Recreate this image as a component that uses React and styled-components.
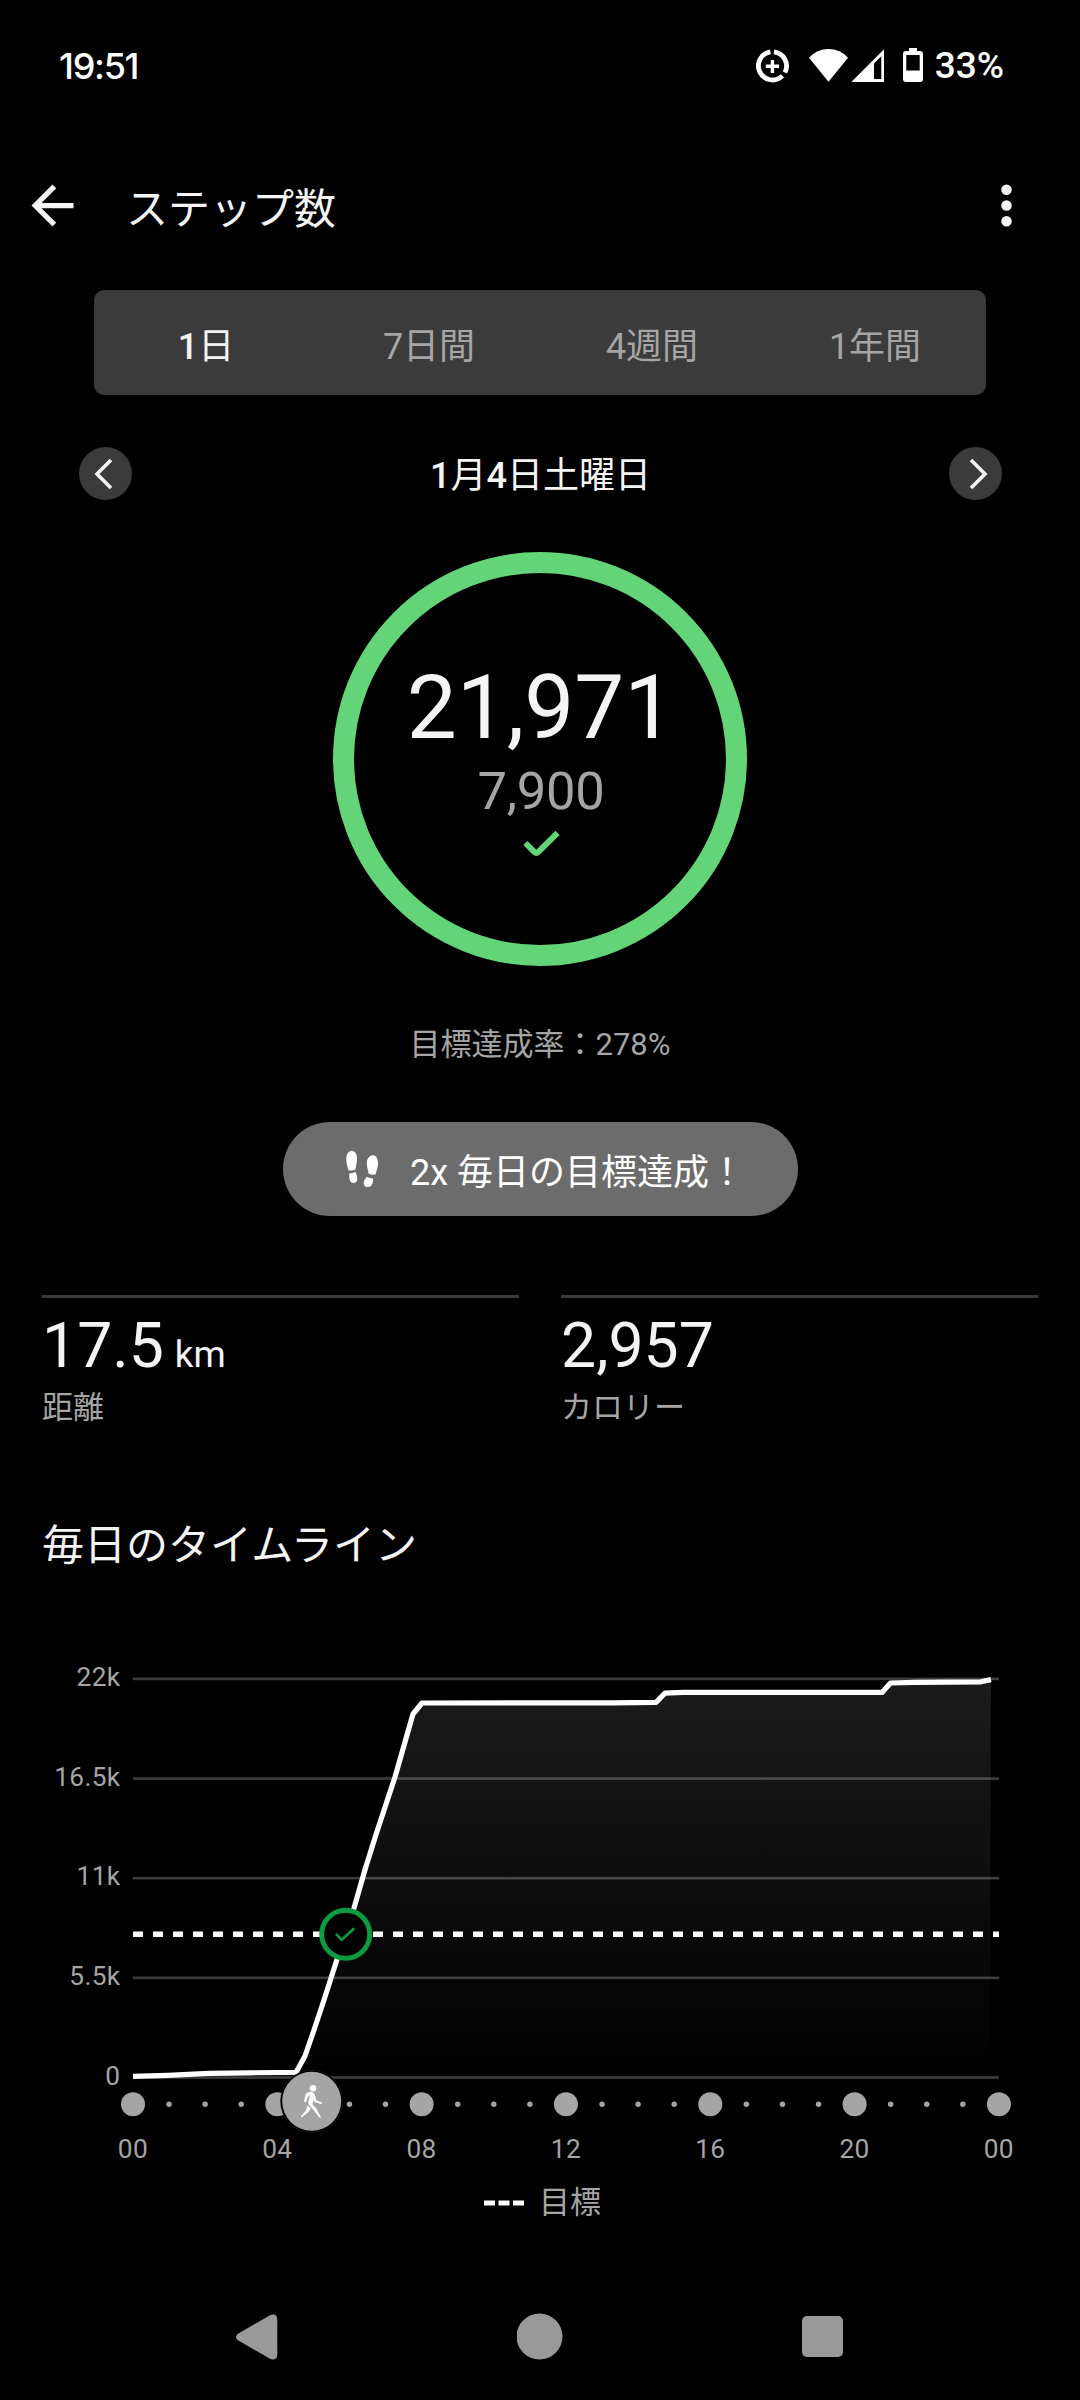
import styled, { createGlobalStyle } from "styled-components";

const GlobalStyle = createGlobalStyle`
  body {
    margin: 0;
    background: #000;
  }
  * {
    box-sizing: border-box;
  }
`;

const Screen = styled.div`
  width: 1080px;
  height: 2400px;
  overflow: hidden;
  display: flex;
  flex-direction: column;
  background: #000;
  color: #f4f4f4;
  font-family: Roboto, "Noto Sans CJK JP", sans-serif;
  font-weight: 400;
`;

const StatusBar = styled.header`
  height: 132px;
  padding: 0 76px 0 59px;
  display: flex;
  align-items: center;
  justify-content: space-between;
  color: #fff;
`;

const Clock = styled.span`
  font-family: Inter, sans-serif;
  font-weight: 500;
  font-size: 36px;
  line-height: 40px;
  letter-spacing: -1.3px;
`;

const StatusIcons = styled.div`
  display: flex;
  align-items: center;
  gap: 11px;
`;

const BatteryLevel = styled.span`
  font-weight: 500;
  font-size: 37px;
  line-height: 40px;
`;

const AppBar = styled.div`
  height: 147px;
  padding: 0 42px 0 21px;
  display: flex;
  align-items: center;
`;

const Title = styled.h1`
  margin: 9px 0 0 42px;
  flex: 1;
  font-size: 42px;
  font-weight: 400;
  line-height: 60px;
`;

const Tabs = styled.nav`
  height: 105px;
  margin: 11px 94px 0;
  display: flex;
  border-radius: 10px;
  background: #3b3b3b;
`;

const Tab = styled.button`
  flex: 1;
  padding: 1px 0 0 1px;
  border: 0;
  background: none;
  font-family: inherit;
  font-size: 36px;
  color: ${(props) => (props.$active ? "#f4f4f4" : "#a5a5a5")};
`;

const Digit = styled.span`
  font-weight: ${(props) => (props.$bold ? 500 : 400)};
`;

const DateRow = styled.div`
  height: 53px;
  margin: 52px 78px 0 79px;
  display: flex;
  align-items: center;
  justify-content: space-between;
`;

const RoundButton = styled.button`
  width: 53px;
  height: 53px;
  padding: 0;
  border: 0;
  border-radius: 50%;
  background: #3b3b3b;
  svg {
    display: block;
  }
`;

const DateText = styled.span`
  padding-top: 6px;
  font-size: 36px;
  line-height: 49px;
`;

const Ring = styled.section`
  width: 414px;
  height: 414px;
  margin: 52px auto 0;
  padding-top: 87px;
  display: flex;
  flex-direction: column;
  align-items: center;
  border: 21px solid #63d478;
  border-radius: 50%;
`;

const Steps = styled.div`
  padding-left: 1px;
  font-size: 89px;
  line-height: 96px;
`;

const Goal = styled.div`
  margin-top: 4px;
  padding-left: 2px;
  font-size: 52.5px;
  line-height: 62px;
  letter-spacing: -0.3px;
  color: #a5a5a5;
`;

const RingCheck = styled.svg`
  margin: 5px 0 0 3px;
`;

const GoalRate = styled.p`
  margin: 58px 0 0;
  text-align: center;
  font-size: 31px;
  line-height: 42px;
  color: #a5a5a5;
`;

const Badge = styled.div`
  width: 515px;
  height: 94px;
  margin: 56px 0 0 283px;
  padding-left: 62px;
  display: flex;
  align-items: center;
  border-radius: 47px;
  background: #6c6c6c;
  color: #fff;
`;

const BadgeText = styled.span`
  margin-left: 31px;
  padding-top: 8px;
  font-size: 36px;
  line-height: 49px;
`;

const Stats = styled.section`
  margin: 79px 42px 0;
  display: flex;
  gap: 42px;
`;

const Stat = styled.div`
  flex: 1;
  height: 142px;
  padding-top: 11px;
  border-top: 3px solid #3b3b3b;
`;

const StatValue = styled.div`
  height: 74px;
  font-size: 62.5px;
  line-height: 74px;
`;

const StatUnit = styled.span`
  margin-left: 11px;
  font-size: 36.75px;
`;

const StatLabel = styled.div`
  margin-top: 3px;
  font-size: 31px;
  line-height: 44px;
  color: #a5a5a5;
`;

const SectionTitle = styled.h2`
  margin: 79px 42px 0;
  font-size: 42px;
  font-weight: 400;
  line-height: 60px;
`;

const Chart = styled.svg`
  display: block;
  flex: none;
  margin-top: 64px;
  text {
    font-size: 26.25px;
    letter-spacing: 0.3px;
    fill: #a5a5a5;
  }
`;

const Legend = styled.div`
  height: 50px;
  margin-top: 2px;
  padding-left: 5px;
  display: flex;
  align-items: center;
  justify-content: center;
  gap: 15px;
  font-size: 31px;
  line-height: 44px;
  color: #a5a5a5;
`;

const NavBar = styled.footer`
  height: 47px;
  margin-top: 85px;
  padding: 0 237px 0 236px;
  display: flex;
  align-items: center;
  justify-content: space-between;
`;

const TABS = [
  ["1", "日"],
  ["7", "日間"],
  ["4", "週間"],
  ["1", "年間"],
];

const Y_LABELS = ["22k", "16.5k", "11k", "5.5k", "0"];
const X_LABELS = ["00", "04", "08", "12", "16", "20", "00"];

// the chart svg starts at this page height, points below are in page pixels
const CHART_TOP = 1640;

const POINTS = [
  [133, 2076.3],
  [168, 2075.3],
  [209, 2073.3],
  [250, 2072.8],
  [296, 2072.4],
  [305, 2056],
  [313, 2033],
  [324, 2000],
  [336.5, 1961],
  [354, 1908],
  [365.5, 1868],
  [376.5, 1833],
  [395, 1777],
  [413, 1714],
  [422, 1703],
  [612, 1702.8],
  [656, 1702.3],
  [665, 1693.2],
  [683, 1692.4],
  [882, 1692.4],
  [890.5, 1683],
  [915, 1682.3],
  [981, 1681.8],
  [991, 1679.6],
];

const line = POINTS.map(([x, y]) => `${x},${y}`).join(" ");

function StepChart() {
  return (
    <Chart width="1080" height="536" viewBox={`0 ${CHART_TOP} 1080 536`}>
      <defs>
        <linearGradient id="area" gradientUnits="userSpaceOnUse" x1="0" y1="1679" x2="0" y2="2077">
          <stop offset="0" stopColor="#1b1b1b" />
          <stop offset="1" stopColor="#000" />
        </linearGradient>
      </defs>
      <polygon points={`${line} 990,2077 133,2077`} fill="url(#area)" />
      {Y_LABELS.map((label, i) => (
        <g key={label}>
          <rect x="133" y={1677.6 + i * 99.65} width="866" height="2.6" fill="#fff" fillOpacity="0.24" />
          <text x="120.3" y={1686 + i * 99.65} textAnchor="end">
            {label}
          </text>
        </g>
      ))}
      <polyline points={line} fill="none" stroke="#fff" strokeWidth="5.2" strokeLinejoin="round" />
      <path d="M133 1934.3H999" stroke="#fff" strokeWidth="5.6" strokeDasharray="10 10" />

      {/* hour dots, a large one every four hours */}
      {Array.from({ length: 25 }, (_, i) => (
        <circle key={i} cx={133 + i * 36.08} cy="2104.3" r={i % 4 === 0 ? 12 : 2.7} fill="#a5a5a5" />
      ))}
      {X_LABELS.map((label, i) => (
        <text key={i} x={132.9 + i * 144.33} y="2158" textAnchor="middle">
          {label}
        </text>
      ))}

      {/* goal reached */}
      <circle cx="345.7" cy="1934.3" r="24" fill="#000" stroke="#0d9b41" strokeWidth="5" />
      <path d="M336 1934l5.8 5.8 12.4-11.6" fill="none" stroke="#0d9b41" strokeWidth="2.6" />

      {/* walking activity */}
      <circle cx="311.7" cy="2101.3" r="31.2" fill="#000" stroke="#222" strokeWidth="0.6" />
      <circle cx="311.7" cy="2101.3" r="29.5" fill="#a5a5a5" />
      <g fill="#fff">
        <circle cx="313" cy="2088.3" r="3.2" />
        <path d="M306 2093.6q3.500-2.600 6.500-1.400q2.300 1 3 5l1 3.300l5.600 2.100l-.4 1.600l-7-2.200l-1.400-2l-.8 4.400l3.800 4.200l4.700 8.800l-1.400.3l-7.600-9.800l-3.200-3.400q-1-1.400-.4-3.200l1.700-6.200l-2.300 1.800l-1.800 5.400l-2-.7l1.200-5.500z" />
        <path d="M307.600 2105.200l3.100 3.200l-1.700 3.100l-7.400 6l-.6-1.200l5-5.900z" />
      </g>
    </Chart>
  );
}

function App() {
  return (
    <>
      <GlobalStyle />
      <Screen>
        <StatusBar>
          <Clock>19:51</Clock>
          <StatusIcons>
            <svg width="168" height="36" viewBox="756 48 168 36" fill="#fff">
              <path d="M774 51.900A14.100 14.100 0 0 1 784.900 72.500M782.400 75.900A14.100 14.100 0 1 1 770.400 51.900" fill="none" stroke="#fff" strokeWidth="4.800" />
              <path d="M765.800 66.300H779M772.400 60V73" stroke="#fff" strokeWidth="3.400" />
              <path d="M828.500 81.700L809 57.700Q817 49 828.500 49T848 57.700Z" />
              <path fillRule="evenodd" d="M851.300 82L884 49.300V82ZM874 63.500V79H881.300V56.300Z" />
              <path fillRule="evenodd" d="M909 48h8v3h3q3 0 3 3v25q0 3-3 3h-14q-3 0-3-3v-25q0-3 3-3h3zM906.300 55v15.500h13.400v-15.500z" />
            </svg>
            <BatteryLevel>33%</BatteryLevel>
          </StatusIcons>
        </StatusBar>

        <AppBar>
          <svg width="63" height="63" viewBox="0 0 24 24" fill="#f4f4f4">
            <path d="M20 11H7.830l5.590-5.590L12 4l-8 8 8 8 1.410-1.410L7.830 13H20z" />
          </svg>
          <Title>ステップ数</Title>
          <svg width="63" height="63" viewBox="0 0 24 24" fill="#f4f4f4">
            <circle cx="12" cy="6" r="2" />
            <circle cx="12" cy="12" r="2" />
            <circle cx="12" cy="18" r="2" />
          </svg>
        </AppBar>

        <Tabs>
          {TABS.map(([count, unit], i) => (
            <Tab key={count + unit} $active={i === 0}>
              <Digit $bold={i === 0}>{count}</Digit>
              {unit}
            </Tab>
          ))}
        </Tabs>

        <DateRow>
          <RoundButton>
            <svg width="53" height="53" fill="none" stroke="#f4f4f4" strokeWidth="3.600">
              <path d="M32 13L18 27l14 14" />
            </svg>
          </RoundButton>
          <DateText>
            <Digit $bold>1</Digit>月<Digit $bold>4</Digit>日土曜日
          </DateText>
          <RoundButton>
            <svg width="53" height="53" fill="none" stroke="#f4f4f4" strokeWidth="3.600">
              <path d="M22 13l14 14-14 14" />
            </svg>
          </RoundButton>
        </DateRow>

        <Ring>
          <Steps>21,971</Steps>
          <Goal>7,900</Goal>
          <RingCheck width="44" height="34" viewBox="520 827 44 34" fill="none" stroke="#63d478" strokeWidth="6">
            <path d="M525.400 843l9.100 9.100q1.800 1.700 3.600 0l19.500-19.300" />
          </RingCheck>
        </Ring>

        <GoalRate>目標達成率：278%</GoalRate>

        <Badge>
          <svg width="34" height="38" viewBox="346 1151 34 38" fill="#fff">
            <path d="M352.500 1152c4 0 5.500 3.500 5.500 8c0 4-1.200 7-1.500 10.500q-3.500 1.300-7 .7c-1-3.500-2.200-7-2.200-11c0-4.500 1.700-8.200 5.200-8.200z" />
            <path d="M350.300 1174.500q3.500-.3 6.300-1.400c.6 2.200 1.700 4 1.700 6.600c0 2.600-1.300 4.300-3.800 4.300c-4 0-4.500-5-4.200-9.500z" />
            <path d="M374 1156.200c3.500 0 5 4 5 8.300c0 4-1.600 7.500-2.500 11q-3.500 1-7-.9c-.3-3.600-1.700-6.400-1.700-10.100c0-4.500 2.200-8.300 6.200-8.300z" />
            <path d="M367.600 1177.800q3 1.600 6.500 1.700c.1 4-.9 8.600-5.200 8.600c-2.600 0-4.200-1.800-4.200-4.200c0-2.500 1.800-4 2.900-6.100z" />
          </svg>
          <BadgeText>2x 毎日の目標達成！</BadgeText>
        </Badge>

        <Stats>
          <Stat>
            <StatValue>
              17.5<StatUnit>km</StatUnit>
            </StatValue>
            <StatLabel>距離</StatLabel>
          </Stat>
          <Stat>
            <StatValue>2,957</StatValue>
            <StatLabel>カロリー</StatLabel>
          </Stat>
        </Stats>

        <SectionTitle>毎日のタイムライン</SectionTitle>
        <StepChart />
        <Legend>
          <svg width="40" height="6">
            <path d="M0 3H40" stroke="#fff" strokeWidth="5" strokeDasharray="11 3.500" />
          </svg>
          <span>目標</span>
        </Legend>

        <NavBar>
          <svg width="42" height="46" viewBox="236 2314.500 42 46" fill="#999">
            <path d="M237.500 2334.500L269.500 2316q7.500-3 7.800 4v35q-.3 7-7.800 4L237.500 2340.500q-3-3 0-6z" />
          </svg>
          <svg width="47" height="47">
            <circle cx="22.500" cy="23.500" r="23" fill="#999" />
          </svg>
          <svg width="41" height="41">
            <rect width="41" height="41" rx="5" fill="#999" />
          </svg>
        </NavBar>
      </Screen>
    </>
  );
}

export default App;
